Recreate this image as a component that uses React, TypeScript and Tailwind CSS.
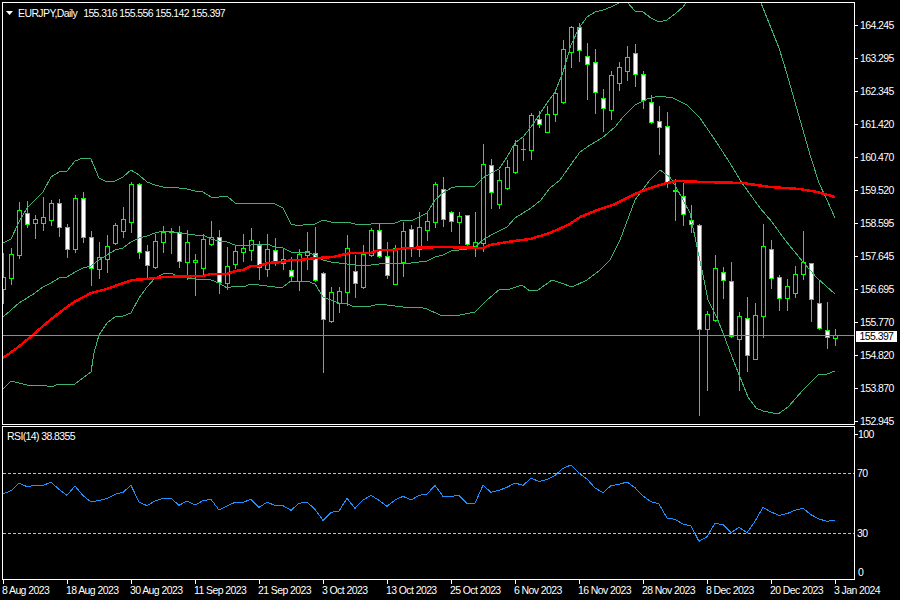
// EURJPY daily chart, MT4 style: candles, bollinger bands, MA and an RSI pane

type Candle = [number, number, number, number, number]

// high, body top, body bottom, low (page y), 1 = white (bear) body
const candles: Candle[] = [
  [253,277,289,303,0],[248,254,278,284,0],[202,210,255,258,0],[201,213,224,227,1],[215,219,223,238,0],
  [197,217,223,230,0],[200,203,220,225,0],[199,203,227,236,1],[224,227,249,257,1],[195,198,249,252,0],
  [192,198,237,242,1],[231,237,268,285,1],[242,257,269,278,0],[235,246,259,272,0],[223,225,243,244,0],
  [207,219,231,237,0],[182,184,222,232,0],[183,184,252,258,1],[245,251,265,277,1],[234,241,267,268,0],
  [226,232,242,252,0],[228,231,232,253,0],[226,232,261,267,1],[230,242,262,279,0],[254,260,262,295,0],
  [234,239,268,275,0],[221,237,244,245,0],[230,237,282,293,1],[247,266,283,289,0],[246,251,264,268,0],
  [234,248,252,261,0],[228,240,250,260,0],[241,245,267,279,1],[234,249,269,276,0],[238,250,261,265,1],
  [248,259,263,269,0],[257,270,276,281,1],[249,254,281,290,0],[232,251,255,269,0],[227,253,280,281,1],
  [272,273,319,372,1],[287,292,321,322,0],[287,291,303,312,0],[235,248,292,305,0],[255,271,283,297,1],
  [245,254,287,288,0],[228,230,255,256,0],[223,230,256,257,1],[242,256,275,278,1],[245,248,284,284,0],
  [222,231,262,276,0],[225,229,247,256,1],[212,227,249,256,0],[212,221,230,240,0],[182,184,222,227,0],
  [177,189,219,226,1],[211,212,221,231,1],[212,216,222,243,0],[215,215,244,247,1],[212,242,246,256,0],
  [144,164,243,251,0],[159,165,192,208,1],[170,180,204,208,0],[160,167,188,189,0],[140,145,172,173,0],
  [138,149,149,160,0],[113,115,150,159,0],[111,119,124,127,1],[106,114,132,132,0],[89,93,114,121,0],
  [40,49,102,103,0],[26,27,52,67,0],[23,27,50,61,1],[43,56,64,99,1],[49,62,92,113,1],
  [89,98,108,131,1],[71,75,110,119,0],[62,67,83,90,0],[46,57,71,80,0],[44,53,74,86,1],
  [71,74,100,108,1],[95,102,122,123,1],[106,121,127,154,1],[112,126,183,187,1],[179,190,191,220,0],
  [183,196,214,225,1],[205,220,224,232,1],[224,225,329,415,1],[311,314,329,390,0],[255,268,320,321,0],
  [267,272,280,298,1],[262,281,336,337,1],[312,316,339,390,0],[297,318,355,371,1],[303,315,359,359,0],
  [224,246,316,337,0],[240,249,278,288,1],[275,277,298,310,1],[279,286,298,310,0],[266,274,293,297,0],
  [231,262,274,279,0],[263,263,299,321,1],[281,303,328,329,1],[302,330,337,348,1],[329,335,338,345,0],
]

const upperBand =
  '3,243 11,239 19,222 27,208 35,200 43,192 51,177 59,172 67,171 75,161 83,158 91,159 99,178 107,182 115,181 123,177 131,170 139,175 147,182 155,185 163,187 171,187 179,188 187,189 195,191 203,192 211,197 219,197 227,196 235,203 243,203 251,203 259,203 267,203 275,204 283,208 291,224 299,226 307,224 315,224 323,220 331,222 339,222 347,222 355,224 363,225 371,224 379,223 387,223 395,223 403,220 411,221 419,217 427,213 435,200 443,193 451,188 459,186 467,186 475,186 483,178 491,173 499,169 507,157 515,143 523,137 531,127 539,115 547,103 555,92 563,72 571,45 579,28 587,17 595,12 603,10 611,7 619,3 623,0 627,2 635,11 643,12 651,18 659,22 667,20 675,14 683,7 691,-5 755,-12 763,8 771,28 779,48 787,74 795,102 803,130 811,158 819,183 827,200 835,218'
const midBand =
  '3,317 11,310 19,303 27,298 35,293 43,287 51,283 59,278 67,277 75,272 83,268 91,266 99,260 107,255 115,250 123,248 131,242 139,238 147,236 155,233 163,231 171,232 179,233 187,234 195,235 203,235 211,239 219,241 227,242 235,245 243,246 251,245 259,244 267,244 275,247 283,248 291,252 299,253 307,252 315,255 323,260 331,262 339,263 347,264 355,265 363,266 371,265 379,264 387,263 395,263 403,264 411,263 419,262 427,261 435,257 443,255 451,251 459,250 467,249 475,247 483,240 491,235 499,231 507,227 515,218 523,213 531,208 541,200 550,188 560,180 572,163 580,152 590,145 602,138 615,127 623,117 635,105 647,99 659,96 673,98 687,105 700,118 715,140 728,160 742,183 760,208 772,222 785,240 803,262 817,278 835,294'
const lowerBand =
  '3,389 11,381 19,383 27,385 35,386 43,385 51,387 59,384 67,384 75,384 83,378 91,372 94,353 99,335 107,323 115,317 123,316 131,313 139,298 147,287 155,278 163,274 171,273 179,277 187,278 195,279 203,279 211,280 219,283 227,288 235,286 243,287 251,284 259,285 267,286 275,287 283,287 291,281 299,281 307,281 315,284 323,297 331,300 339,303 347,304 355,307 363,306 371,306 379,304 387,305 395,306 403,307 411,307 419,307 427,309 440,315 460,315 475,312 487,300 500,289 507,290 522,285 530,291 538,290 552,280 558,282 572,287 587,280 595,274 600,270 610,260 620,240 635,200 650,180 660,170 670,177 676,187 690,213 697,247 702,270 708,300 717,318 723,333 732,357 740,377 748,397 756,408 763,411 778,414 788,407 803,390 819,374 827,374 835,371'
const maLine =
  '3,358 17,348 33,335 50,320 67,307 76,301 91,293 107,289 123,283 133,280 147,279 163,277 203,276 211,274 227,274 235,271 243,270 251,266 259,266 267,263 283,262 291,260 299,260 317,258 333,257 350,253 370,253 380,250 393,250 407,248 443,247 483,248 490,245 507,242 530,239 550,233 570,224 580,217 600,209 613,205 635,194 650,188 667,183 677,181 703,182 743,183 770,187 800,189 817,192 835,197'

// y in the 3x zoom of the rsi pane, one per bar
const rsiRaw = [
  222,212,190,200,196,196,187,208,226,198,227,246,241,236,223,217,196,246,257,243,235,235,256,243,255,242,238,270,258,247,247,238,262,247,256,257,271,250,
  246,268,301,277,273,235,265,240,226,241,259,240,229,240,226,222,196,229,229,226,250,250,196,217,211,202,189,196,175,184,179,166,145,135,160,177,204,
  218,197,193,186,203,228,245,252,294,298,312,318,364,350,310,314,338,322,338,304,262,276,286,281,271,265,284,297,304,300,
]
const rsiLine = rsiRaw.map((v, i) => `${3 + 8 * i},${420 + v / 3}`).join(' ')

const priceLabels = ['164.245','163.295','162.345','161.420','160.470','159.520','158.595','157.645','156.695','155.770','154.820','153.870','152.945']
const dateLabels = ['8 Aug 2023','18 Aug 2023','30 Aug 2023','11 Sep 2023','21 Sep 2023','3 Oct 2023','13 Oct 2023','25 Oct 2023','6 Nov 2023','16 Nov 2023','28 Nov 2023','8 Dec 2023','20 Dec 2023','3 Jan 2024']

function CandleBar({ c, x }: { c: Candle; x: number }) {
  const [high, top, bottom, low, white] = c
  return (
    <g>
      <rect x={x} y={high} width={1} height={low - high + 1} fill="#00ff00" />
      <rect x={x - 2} y={top} width={5} height={bottom - top + 1} fill="#00ff00" />
      {bottom - top > 1 && (
        <rect x={x - 1} y={top + 1} width={3} height={bottom - top - 1} fill={white ? '#ffffff' : '#000000'} />
      )}
    </g>
  )
}

function Band({ points }: { points: string }) {
  return <polyline points={points} fill="none" stroke="#3cb371" strokeWidth={1} />
}

export default function App() {
  return (
    <div className="w-[900px] h-[600px] bg-black text-white overflow-hidden relative text-[10.5px] tracking-[-0.6px] font-['Liberation_Sans',sans-serif] leading-none pl-[2px] pt-[2px]">
      <div className="flex">
        <div className="w-[853px] flex flex-col gap-px">
          {/* price pane */}
          <div className="relative h-[423px] border border-white">
            <svg className="block" width={851} height={421} viewBox="3 3 851 421" shapeRendering="crispEdges">
              {candles.map((c, i) => (
                <CandleBar key={i} c={c} x={3 + 8 * i} />
              ))}
              <Band points={upperBand} />
              <Band points={midBand} />
              <Band points={lowerBand} />
              <polyline points={maLine} fill="none" stroke="#ff0000" strokeWidth={2.5} />
              <rect x={3} y={335} width={851} height={1} fill="#8c8c8c" />
            </svg>
            <div className="absolute left-[3px] top-[4px] flex items-center gap-[5px] h-[12px]">
              <svg width={7} height={4} viewBox="0 0 7 4" className="block">
                <path d="M0 0h7L3.5 4z" fill="#ffffff" />
              </svg>
              <span className="flex gap-[6px]">
                <span>EURJPY,Daily</span>
                <span>155.316 155.556 155.142 155.397</span>
              </span>
            </div>
          </div>
          {/* rsi pane */}
          <div className="relative h-[154px] border border-white">
            <svg className="block" width={851} height={152} viewBox="3 427 851 152" shapeRendering="crispEdges">
              <line x1={3} x2={854} y1={473.5} y2={473.5} stroke="#c0c0c0" strokeDasharray="3 2" />
              <line x1={3} x2={854} y1={533.5} y2={533.5} stroke="#c0c0c0" strokeDasharray="3 2" />
              <polyline points={rsiLine} fill="none" stroke="#1e90ff" strokeWidth={1} />
            </svg>
            <div className="absolute left-[4px] top-[3px] h-[12px] flex items-center">RSI(14) 38.8355</div>
          </div>
        </div>

        {/* value axes */}
        <div className="relative w-[45px] flex flex-col">
          <div className="h-[424px] pt-[7px]">
            {priceLabels.map((p) => (
              <div key={p} className="h-[33px] flex items-center gap-[2px]">
                <div className="w-[3px] h-px bg-white" />
                <span>{p}</span>
              </div>
            ))}
          </div>
          <div className="absolute left-[1px] top-[329px] w-[41px] h-[11px] bg-white text-black flex items-center justify-center">
            155.397
          </div>
          <div className="flex flex-col">
            <div className="h-[14px] mt-[1px] flex items-center">
              <div className="w-[3px] h-px bg-white" />
              <span>100</span>
            </div>
            <div className="h-[14px] mt-[25px] flex items-center pl-[2px]">
              <span>70</span>
            </div>
            <div className="h-[14px] mt-[46px] flex items-center pl-[2px]">
              <span>30</span>
            </div>
            <div className="h-[14px] mt-[25px] flex items-center pl-[3px]">
              <span>0</span>
            </div>
          </div>
        </div>
      </div>

      {/* time axis */}
      <div className="flex">
        {dateLabels.map((d) => (
          <div key={d} className="w-[64px] shrink-0 flex flex-col">
            <div className="w-px h-[4px] ml-px bg-white" />
            <span className="mt-[1px] whitespace-nowrap">{d}</span>
          </div>
        ))}
      </div>
    </div>
  )
}
